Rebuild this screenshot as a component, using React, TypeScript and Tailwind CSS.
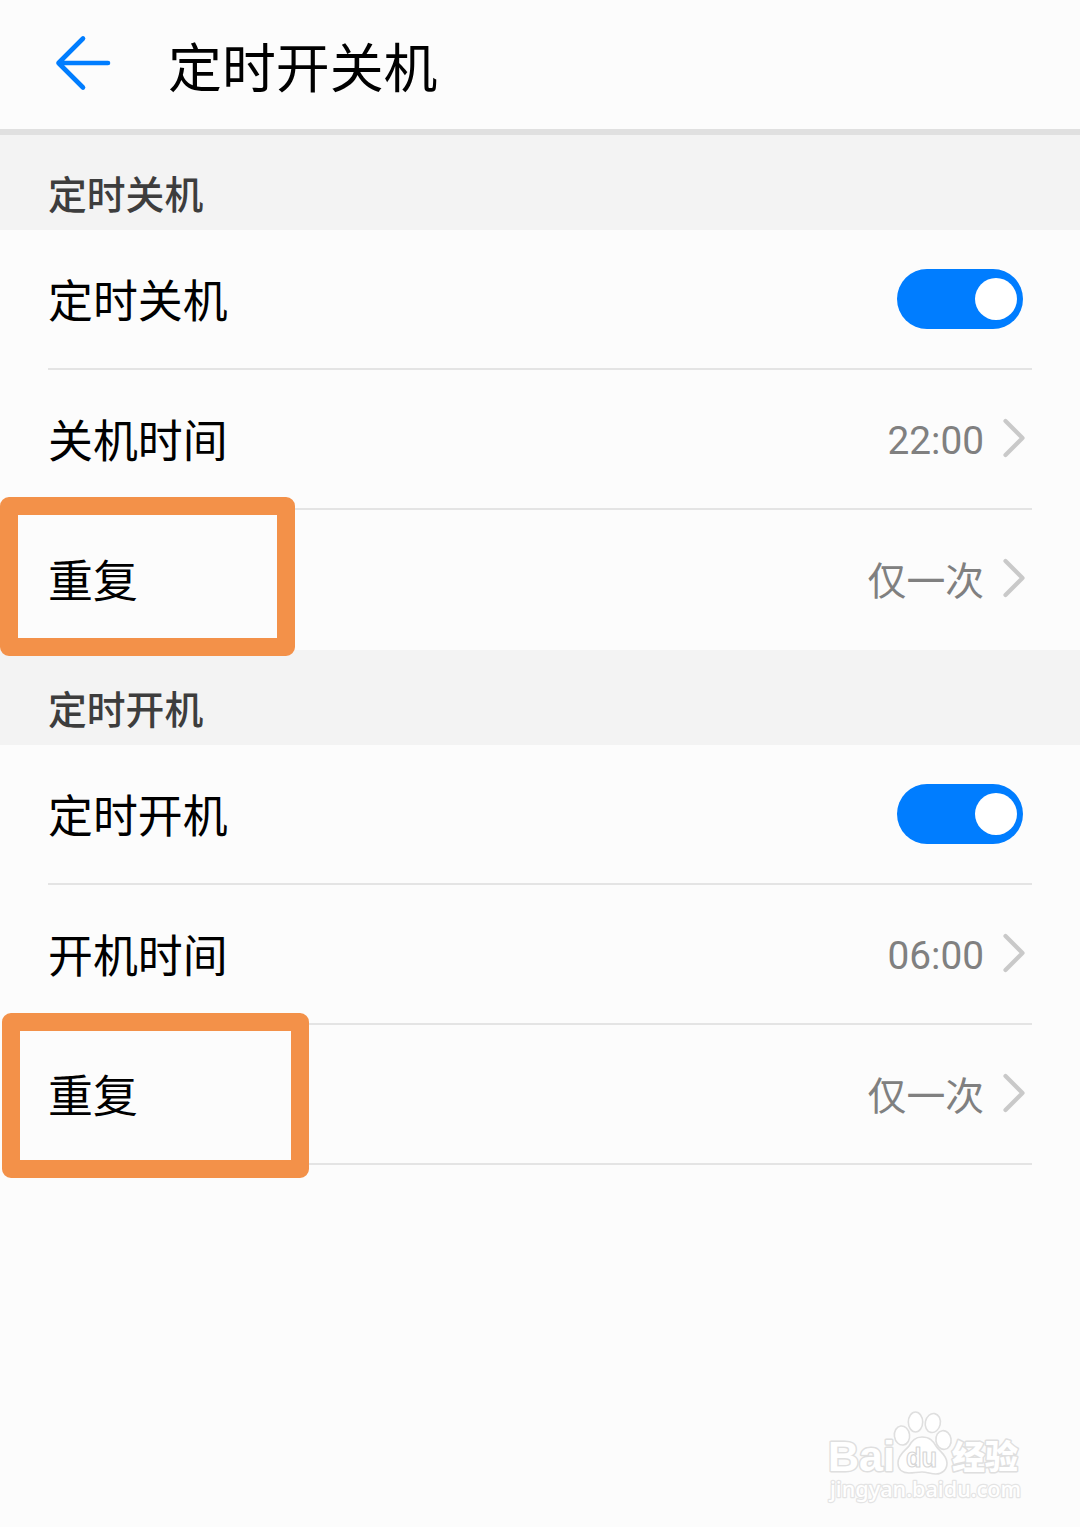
import React, { useState } from 'react';

function Highlight({ className }: { className: string }) {
  return <div className={`absolute z-10 rounded-[9px] border-[18px] border-[#f39149] pointer-events-none ${className}`} />;
}

function SectionTitle({ children }: { children: React.ReactNode }) {
  return (
    <h2 className="flex h-[95px] items-center bg-[#f3f3f3] pt-[27px] pl-12 text-[38.8px] leading-none font-medium text-[#3d3d3d]">
      {children}
    </h2>
  );
}

interface RowProps {
  label: string;
  border?: boolean;
  highlight?: string;
  children: React.ReactNode;
}

function Row({ label, border = true, highlight, children }: RowProps) {
  return (
    <div className="relative h-[140px] px-12">
      <div
        className={`flex h-full items-center justify-between border-b-2 ${
          border ? 'border-[#e4e4e4]' : 'border-transparent'
        }`}
      >
        <span className="pt-2 text-[44.9px] leading-none text-black">{label}</span>
        {children}
      </div>
      {highlight && <Highlight className={highlight} />}
    </div>
  );
}

function Toggle() {
  const [checked, setChecked] = useState(true);

  return (
    <button
      role="switch"
      aria-checked={checked}
      onClick={() => setChecked(!checked)}
      className={`mr-[9px] flex h-[60px] w-[126px] items-center rounded-full px-1.5 ${
        checked ? 'justify-end bg-[#007dff]' : 'justify-start bg-gray-300'
      }`}
    >
      <span className="size-[42px] rounded-full bg-white" />
    </button>
  );
}

function Value({ children, className = 'pt-1' }: { children: React.ReactNode; className?: string }) {
  return (
    <div className="flex items-center gap-[18px] pr-1.5">
      <span className={`text-[38.8px] leading-none text-[#808080] ${className}`}>{children}</span>
      <svg className="mb-0.5" width="24" height="40" viewBox="0 0 24 40" fill="none" stroke="#c9c9c9" strokeWidth="4.2" strokeLinecap="round" strokeLinejoin="round">
        <path d="M3.5 3 20.5 20 3.5 37" />
      </svg>
    </div>
  );
}

function Watermark() {
  return (
    <svg width="204" height="104" viewBox="0 0 204 104" fill="#fff" stroke="#dfdfdf" strokeWidth="1.6" strokeLinejoin="round">
      <g fontFamily="'Liberation Sans', sans-serif" fontWeight="700" paintOrder="stroke" strokeWidth="3">
        <text x="5" y="62" fontSize="43" textLength="67" lengthAdjust="spacingAndGlyphs">Bai</text>
        <text x="129" y="60" fontSize="33" fontWeight="900" fontFamily="'Noto Sans CJK SC', sans-serif" textLength="66" lengthAdjust="spacingAndGlyphs">经验</text>
        <text x="7" y="88" fontSize="21.5" fontWeight="500" strokeWidth="2.4" stroke="#e4e4e4" fontFamily="'Noto Sans', sans-serif" textLength="191" lengthAdjust="spacingAndGlyphs">jingyan.baidu.com</text>
      </g>
      <ellipse cx="79" cy="26.5" rx="7.6" ry="9.6" transform="rotate(-8 79 26.5)" />
      <ellipse cx="92.5" cy="13" rx="7.2" ry="10" />
      <ellipse cx="109.8" cy="14" rx="7.5" ry="9.6" transform="rotate(12 109.8 14)" />
      <ellipse cx="120.5" cy="31" rx="7.6" ry="9.4" transform="rotate(-8 120.5 31)" />
      <path d="M99 28c-7 0-10 4-13 9-3 4-11 8-11 17 0 7 5 10 11 10 5 0 8-1 13-1s9 2 14 2c6 0 11-4 11-11 0-8-8-12-11-17s-6-9-14-9Z" />
      <text x="83" y="58" fontSize="27" strokeWidth="1.2" stroke="#d6d6d6" fontFamily="'Liberation Sans', sans-serif" fontWeight="700" textLength="31" lengthAdjust="spacingAndGlyphs">du</text>
    </svg>
  );
}

export default function App() {
  return (
    <div className="relative min-h-[1527px] w-[1080px] overflow-hidden bg-[#fcfcfc] font-[Roboto,'Noto_Sans_CJK_SC',sans-serif]">
      {/* Header */}
      <header className="flex h-[135px] items-center border-b-[6px] border-[#e0e0e0] pl-[54px]">
        <button aria-label="返回" className="pb-[3px]">
          <svg width="58" height="58" viewBox="0 0 58 58" fill="none" stroke="#007dff" strokeWidth="4.6" strokeLinecap="round" strokeLinejoin="round">
            <path d="M29 4.5 4.5 29 29 53.5M4.5 29H54" />
          </svg>
        </button>
        <h1 className="ml-14 pt-2.5 text-[53.9px] leading-none text-black">定时开关机</h1>
      </header>

      {/* Scheduled power off */}
      <section>
        <SectionTitle>定时关机</SectionTitle>
        <Row label="定时关机">
          <Toggle />
        </Row>
        <Row label="关机时间">
          <Value>22:00</Value>
        </Row>
        <Row label="重复" border={false} highlight="-top-[13.5px] left-0 h-[159.5px] w-[295.4px]">
          <Value className="pt-1.5">仅一次</Value>
        </Row>
      </section>

      {/* Scheduled power on */}
      <section>
        <SectionTitle>定时开机</SectionTitle>
        <Row label="定时开机">
          <Toggle />
        </Row>
        <Row label="开机时间">
          <Value>06:00</Value>
        </Row>
        <Row label="重复" highlight="-top-3 left-0.5 h-[165.4px] w-[307px]">
          <Value className="pt-1.5">仅一次</Value>
        </Row>
      </section>

      <div className="absolute right-[53px] bottom-[14px]">
        <Watermark />
      </div>
    </div>
  );
}
